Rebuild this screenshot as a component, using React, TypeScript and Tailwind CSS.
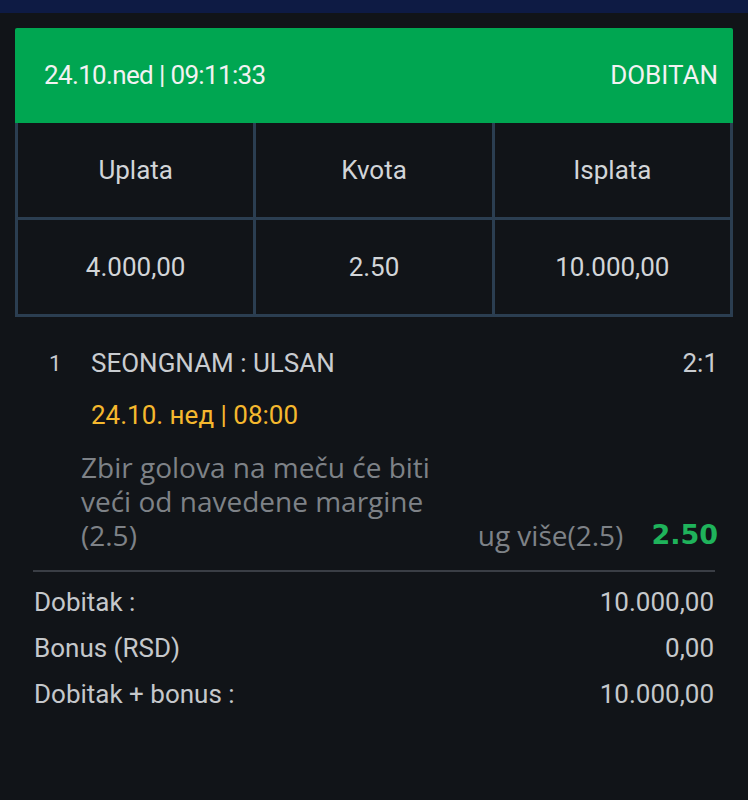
const cells = [
  ["Uplata", "Kvota", "Isplata"],
  ["4.000,00", "2.50", "10.000,00"],
];

const summary = [
  { label: "Dobitak :", value: "10.000,00" },
  { label: "Bonus (RSD)", value: "0,00" },
  { label: "Dobitak + bonus :", value: "10.000,00" },
];

const description = ["Zbir golova na meču će biti", "veći od navedene margine", "(2.5)"];

export default function App() {
  return (
    <div className="min-h-[800px] w-full bg-[#111418] font-['Roboto',sans-serif]">
      <div className="h-[13px] bg-[#0e1b44]" />
      <div className="px-[15px] pt-[15px]">
        <div className="flex h-[95px] items-center justify-between rounded-t-[2px] bg-[#00a651] pl-[29px] pr-[15px] text-[26px] tracking-tight text-[#f2f2f2]">
          <span>24.10.ned | 09:11:33</span>
          <span className="tracking-normal">DOBITAN</span>
        </div>
        <div className="grid grid-cols-3 gap-[3px] bg-[#2b3e51] px-[3px] pb-[3px]">
          {cells.map((row, r) =>
            row.map((text, c) => (
              <div
                key={r + "-" + c}
                className="flex h-[94px] items-center justify-center bg-[#111418] text-[26px] text-[#d2d5d8]"
              >
                {text}
              </div>
            ))
          )}
        </div>

        <div className="mt-[28px] pl-[34px] pr-[15px] text-[26px]">
          <div className="flex h-[36px] items-center text-[#c9ccd0]">
            <span className="w-[42px] text-[22px]">1</span>
            <span className="flex-1">SEONGNAM : ULSAN</span>
            <span>2:1</span>
          </div>
          <div className="mt-[16px] flex h-[36px] items-center pl-[42px] text-[#f5b82e]">
            24.10. нед | 08:00
          </div>
        </div>
        <div className="mt-[17px] flex items-end pl-[66px] pr-[15px] font-['Open_Sans',sans-serif] text-[28px] leading-[34px] text-[#7e8287]">
          <div className="flex flex-1 flex-col">
            {description.map((line) => (
              <div key={line} className="h-[34px]">
                {line}
              </div>
            ))}
          </div>
          <span>ug više(2.5)</span>
          <span className="ml-[28px] font-['DejaVu_Sans',sans-serif] text-[27px] font-bold text-[#1fb35b]">
            2.50
          </span>
        </div>

        <div className="mx-[18px] mt-[18px] h-[2px] bg-[#3a3e45]" />
        <div className="mt-[7px] px-[19px]">
          {summary.map((s) => (
            <div
              key={s.label}
              className="flex h-[46px] items-center justify-between text-[26px] text-[#c5c8cb]"
            >
              <span>{s.label}</span>
              <span>{s.value}</span>
            </div>
          ))}
        </div>
      </div>
    </div>
  );
}
